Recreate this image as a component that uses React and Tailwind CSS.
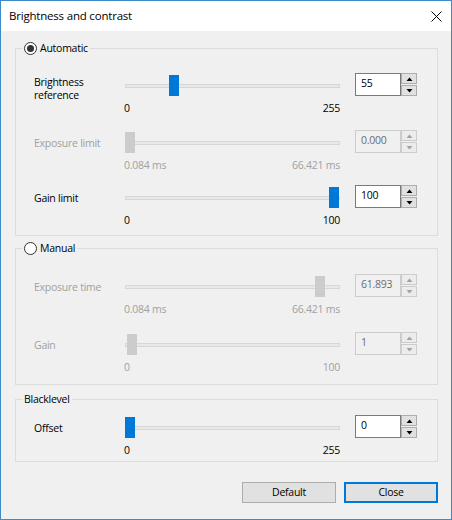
import React from "react";

function Arrow({ up, color }) {
  return (
    <svg width="7" height="4" viewBox="0 0 7 4" className="block">
      <polygon points={up ? "0.5,4 6.5,4 3.5,0.5" : "0.5,0 6.5,0 3.5,3.5"} fill={color} />
    </svg>
  );
}

function Spin({ value, disabled }) {
  const btn = disabled
    ? "border-[#cccccc] bg-[#ececec]"
    : "border-[#adadad] bg-[#e1e1e1]";
  const arrow = disabled ? "#a3a3a3" : "#000000";
  return (
    <div className="-mt-[2px] ml-[15px] flex h-[23px] w-[62px]">
      <div
        className={`flex-1 border pl-[5px] leading-[18px] ${
          disabled
            ? "border-[#cccccc] bg-[#f0f0f0] text-[#6d6d6d]"
            : "border-[#7a7a7a] bg-white text-black"
        }`}
      >
        {value}
      </div>
      <div className="flex w-[16px] flex-col gap-[1px]">
        <div className={`flex h-[11px] items-center justify-center border ${btn}`}>
          <Arrow up color={arrow} />
        </div>
        <div className={`flex h-[11px] items-center justify-center border ${btn}`}>
          <Arrow color={arrow} />
        </div>
      </div>
    </div>
  );
}

function Row({ label, twoLine, min, max, frac, value, disabled, className = "" }) {
  const left = 1 + Math.round(frac * 204);
  const text = disabled ? "text-[#a0a0a0]" : "text-black";
  return (
    <div className={`flex items-start ${className}`}>
      <div className={`w-[90px] leading-[13px] ${twoLine ? "pt-[1px]" : "pt-[5px]"} ${text}`}>{label}</div>
      <div className="w-[216px]">
        <div className="relative h-[21px] pt-[9px]">
          <div className="ml-[1px] h-[4px] border border-[#d6d6d6] bg-[#e7eaea]" />
          <div
            className={`absolute top-0 h-[21px] w-[10px] ${disabled ? "bg-[#cccccc]" : "bg-[#0078d7]"}`}
            style={{ left }}
          />
        </div>
        <div className={`mt-[6px] flex justify-between leading-[13px] ${text}`}>
          <span>{min}</span>
          <span>{max}</span>
        </div>
      </div>
      <Spin value={value} disabled={disabled} />
    </div>
  );
}

function Radio({ checked }) {
  return (
    <span className="flex h-[13px] w-[13px] items-center justify-center rounded-full border border-[#333333] bg-white">
      {checked && <span className="h-[7px] w-[7px] rounded-full bg-[#333333]" />}
    </span>
  );
}

export default function App() {
  return (
    <div className="flex h-[520px] w-[452px] flex-col overflow-hidden border border-[#3f8bc9] bg-[#f0f0f0] font-['Open_Sans',sans-serif] text-[10.5px] tracking-[-0.25px] text-black">
      <div className="flex h-[30px] shrink-0 items-center justify-between bg-white pl-[8px] pr-[9px]">
        <span className="text-[11.5px] leading-[16px] tracking-[-0.2px]">Brightness and contrast</span>
        <svg width="11" height="11" viewBox="0 0 11 11" className="block">
          <path d="M0.5 0.5 L10.5 10.5 M10.5 0.5 L0.5 10.5" stroke="#000" strokeWidth="1" />
        </svg>
      </div>

      <div className="flex flex-1 flex-col pl-[14px] pr-[13px] pt-[9px]">
        <fieldset className="min-w-0 border border-[#dcdcdc] pb-[8px] pl-[7px] pt-[19px]">
          <legend className="pl-[1px] pr-[2px]">
            <span className="flex h-[16px] items-center gap-[3px]">
              <Radio checked />
              <span className="leading-[13px]">Automatic</span>
            </span>
          </legend>
          <div className="pl-[11px]">
            <Row
              label={
                <>
                  Brightness
                  <br />
                  reference
                </>
              }
              twoLine
              min="0"
              max="255"
              frac={55 / 255}
              value="55"
            />
            <Row
              className="mt-[17px]"
              label="Exposure limit"
              min="0.084 ms"
              max="66.421 ms"
              frac={0}
              value="0.000"
              disabled
            />
            <Row className="mt-[15px]" label="Gain limit" min="0" max="100" frac={1} value="100" />
          </div>
        </fieldset>

        <fieldset className="mt-[4px] min-w-0 border border-[#dcdcdc] pb-[10px] pl-[7px] pt-[20px]">
          <legend className="pl-[1px] pr-[2px]">
            <span className="flex h-[16px] items-center gap-[3px]">
              <Radio />
              <span className="leading-[13px]">Manual</span>
            </span>
          </legend>
          <div className="pl-[11px]">
            <Row
              label="Exposure time"
              min="0.084 ms"
              max="66.421 ms"
              frac={(61.893 - 0.084) / (66.421 - 0.084)}
              value="61.893"
              disabled
            />
            <Row className="mt-[18px]" label="Gain" min="0" max="100" frac={1 / 100} value="1" disabled />
          </div>
        </fieldset>

        <fieldset className="mt-[6px] min-w-0 border border-[#dcdcdc] pb-[4px] pl-[7px] pt-[10px]">
          <legend className="pl-[1px] pr-[2px]">
            <span className="flex h-[16px] items-center leading-[13px]">Blacklevel</span>
          </legend>
          <div className="pl-[11px]">
            <Row label="Offset" min="0" max="255" frac={0} value="0" />
          </div>
        </fieldset>

        <div className="mt-[20px] flex justify-end gap-[8px]">
          <div className="flex h-[21px] w-[94px] items-center justify-center border border-[#adadad] bg-[#e1e1e1] leading-[13px]">
            Default
          </div>
          <div className="flex h-[21px] w-[94px] items-center justify-center border-2 border-[#0078d7] bg-[#e1e1e1] leading-[13px]">
            Close
          </div>
        </div>
      </div>
    </div>
  );
}
